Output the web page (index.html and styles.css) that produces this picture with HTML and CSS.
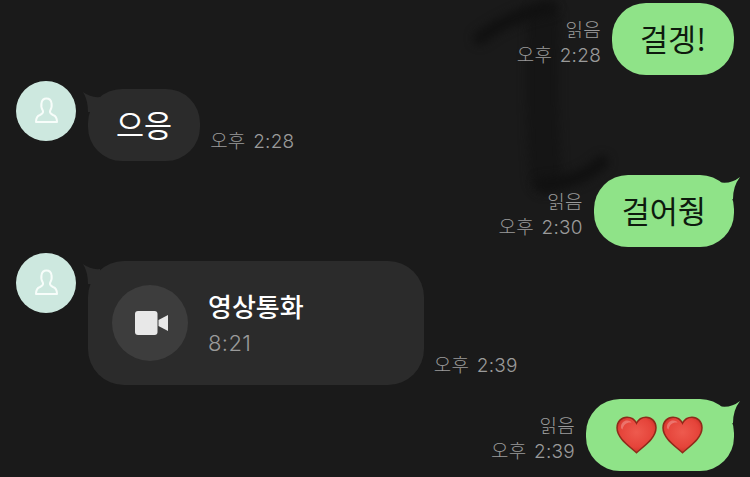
FILE: index.html
```html
<!DOCTYPE html>
<html lang="ko">
<head>
    <meta charset="UTF-8">
    <title>채팅</title>
    <link rel="stylesheet" href="styles.css">
</head>
<body>
    <!-- hand drawn "1" on the chat wallpaper -->
    <svg class="wallpaper" width="750" height="477" viewBox="0 0 750 477">
        <path class="stroke-wide" d="M544 18 Q540 100 546 178"/>
        <path class="stroke-thin" d="M480 38 Q512 14 550 8"/>
        <path class="stroke-thin" d="M542 184 Q578 184 602 162"/>
    </svg>

    <div class="chat">
        <div class="row row-me row-first">
            <div class="meta">
                <span>읽음</span>
                <span>오후 2:28</span>
            </div>
            <div class="bubble bubble-me">걸겡!</div>
        </div>

        <div class="row row-you row-tight">
            <div class="avatar">
                <svg width="60" height="60" viewBox="0 0 60 60">
                    <path class="person" d="M27 30C25 27 25 24.500 25.500 22C26 19 28 17.500 30.500 17.500C33 17.500 35 19 35.500 22C36 24.500 36 27 34 30C33.500 32 35 33 37 34C40 35 41 37 41 41L20 41C20 37 21 35 24 34C26 33 27.500 32 27 30Z"/>
                </svg>
            </div>
            <div class="bubble bubble-you">
                <svg class="tail tail-you" width="18" height="20" viewBox="0 0 18 20">
                    <path d="M0 0Q8 6 17 5L17 20L5 20Q5 8 0 0Z"/>
                </svg>
                으응
            </div>
            <div class="meta">
                <span>오후 2:28</span>
            </div>
        </div>

        <div class="row row-me">
            <div class="meta">
                <span>읽음</span>
                <span>오후 2:30</span>
            </div>
            <div class="bubble bubble-me">
                <svg class="tail tail-me" width="22" height="22" viewBox="0 0 22 22">
                    <path d="M22 0Q12 8 0 5L0 22L15 22Q15 9 22 0Z"/>
                </svg>
                걸어줭
            </div>
        </div>

        <div class="row row-you row-tight">
            <div class="avatar">
                <svg width="60" height="60" viewBox="0 0 60 60">
                    <path class="person" d="M27 30C25 27 25 24.500 25.500 22C26 19 28 17.500 30.500 17.500C33 17.500 35 19 35.500 22C36 24.500 36 27 34 30C33.500 32 35 33 37 34C40 35 41 37 41 41L20 41C20 37 21 35 24 34C26 33 27.500 32 27 30Z"/>
                </svg>
            </div>
            <div class="bubble-call">
                <svg class="tail tail-you" width="18" height="20" viewBox="0 0 18 20">
                    <path d="M0 0Q8 6 17 5L17 20L5 20Q5 8 0 0Z"/>
                </svg>
                <div class="call-icon">
                    <svg width="34" height="26" viewBox="0 0 34 26">
                        <rect x="0" y="1" width="22.500" height="24" rx="3"/>
                        <path d="M23.500 10L33 5L33 21L23.500 16Z"/>
                    </svg>
                </div>
                <div class="call-text">
                    <div class="call-title">영상통화</div>
                    <div class="call-time">8:21</div>
                </div>
            </div>
            <div class="meta">
                <span>오후 2:39</span>
            </div>
        </div>

        <div class="row row-me">
            <div class="meta">
                <span>읽음</span>
                <span>오후 2:39</span>
            </div>
            <div class="bubble bubble-me bubble-hearts">
                <svg class="tail tail-me" width="22" height="22" viewBox="0 0 22 22">
                    <path d="M22 0Q12 8 0 5L0 22L15 22Q15 9 22 0Z"/>
                </svg>
                <svg class="heart" width="41" height="38" viewBox="0 0 41 38">
                    <use href="#heart-shape"/>
                </svg>
                <svg class="heart" width="41" height="38" viewBox="0 0 41 38">
                    <use href="#heart-shape"/>
                </svg>
            </div>
        </div>
    </div>

    <svg width="0" height="0" class="defs">
        <defs>
            <radialGradient id="heart-fill" cx="0.5" cy="0.42" r="0.6">
                <stop offset="0" stop-color="#ee5a4e"/>
                <stop offset="0.7" stop-color="#e5443a"/>
                <stop offset="1" stop-color="#c92e26"/>
            </radialGradient>
            <g id="heart-shape">
                <path fill="url(#heart-fill)" stroke="#8f2a1a" stroke-width="1.500" d="M20.500 36.800C14 30.500 1 22.500 1 11.800C1 5.500 5.600 1.200 11 1.200C15 1.200 18.600 3.400 20.500 7.200C22.400 3.400 26 1.200 30 1.200C35.400 1.200 40 5.500 40 11.800C40 22.500 27 30.500 20.500 36.800Z"/>
                <path fill="#fff" opacity="0.25" d="M5 11C5 7 8 4.500 11 4.500C13.500 4.500 15 5.500 15.500 6.500C11 6 7.500 8 6.500 13.500C5.500 13 5 12 5 11Z"/>
            </g>
        </defs>
    </svg>
</body>
</html>
```

FILE: styles.css
```css
* {
    box-sizing: border-box;
}
body {
    margin: 0;
    height: 477px;
    overflow: hidden;
    background-color: #1a1a1a;
    font-family: "Inter", "Noto Sans CJK KR", sans-serif;
}
.wallpaper {
    position: absolute;
    top: 0;
    left: 0;
}
.wallpaper path {
    fill: none;
    stroke-linecap: round;
    filter: blur(4px);
}
.wallpaper .stroke-thin {
    stroke: #111;
    stroke-width: 14px;
}
.wallpaper .stroke-wide {
    stroke: #151515;
    stroke-width: 32px;
}
.defs {
    position: absolute;
}
.chat {
    position: relative;
    display: flex;
    flex-direction: column;
}
.row {
    display: flex;
    align-items: flex-end;
    margin-top: 14px;
}
.row-first {
    margin-top: 3px;
}
.row-tight {
    margin-top: 6px;
}
.row-me {
    justify-content: flex-end;
    padding-right: 16px;
}
.row-you {
    padding-left: 16px;
}
.row-you .avatar {
    align-self: flex-start;
}
.avatar {
    width: 60px;
    height: 60px;
    margin-right: 12px;
    border-radius: 50%;
    background-color: #cde8df;
}
.avatar svg {
    display: block;
}
.person {
    fill: none;
    stroke: #f7fdfa;
    stroke-width: 2px;
    stroke-linejoin: round;
}
.meta {
    display: flex;
    flex-direction: column;
    padding-bottom: 7px;
    font-size: 19px;
    font-weight: 300;
    line-height: 25px;
    letter-spacing: 0.25px;
    word-spacing: 2px;
    color: #9a9a9a;
}
.row-me .meta {
    align-items: flex-end;
    margin-right: 11px;
}
.row-you .meta {
    margin-left: 10px;
}
.bubble {
    position: relative;
    display: flex;
    align-items: center;
    height: 72px;
    padding: 0 28px 2px;
    border-radius: 34px;
    font-family: "Noto Sans CJK KR", sans-serif;
    font-size: 30.500px;
}
.bubble-me {
    background-color: #8fe388;
    color: #0e1a0e;
}
.bubble-you {
    background-color: #2b2b2b;
    color: #fff;
}
.bubble-hearts {
    gap: 5px;
    padding: 0 31px 0 30px;
}
.tail {
    position: absolute;
    display: block;
}
.tail-me {
    top: 2px;
    right: -6px;
    fill: #8fe388;
}
.tail-you {
    top: 3px;
    left: -5px;
    fill: #2b2b2b;
}
.bubble-call {
    position: relative;
    display: flex;
    align-items: center;
    gap: 20px;
    height: 124px;
    margin-top: 8px;
    padding: 0 120px 0 24px;
    border-radius: 36px;
    background-color: #2b2b2b;
}
.row-you .bubble-you {
    margin-top: 8px;
}
.call-icon {
    display: flex;
    align-items: center;
    justify-content: center;
    width: 76px;
    height: 76px;
    padding-left: 4px;
    border-radius: 50%;
    background-color: #3d3d3d;
    fill: #e8e8e8;
}
.call-text {
    display: flex;
    flex-direction: column;
    gap: 3px;
    padding-top: 1px;
}
.call-title {
    margin-top: -2px;
    font-family: "Noto Sans CJK KR", sans-serif;
    font-size: 26px;
    font-weight: 500;
    line-height: 38px;
    color: #fff;
}
.call-time {
    font-size: 22px;
    font-weight: 300;
    line-height: 30px;
    letter-spacing: 0.4px;
    color: #9a9a9a;
}
```
